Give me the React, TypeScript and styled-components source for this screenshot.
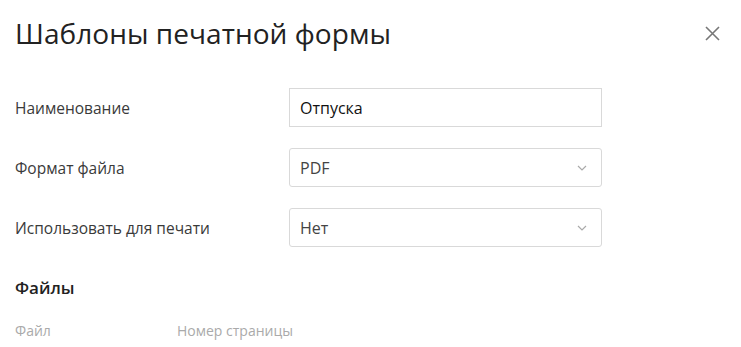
import React from 'react';
import styled, { createGlobalStyle } from 'styled-components';

const GlobalStyle = createGlobalStyle`
  html, body {
    margin: 0;
    padding: 0;
    background: #fff;
  }
  body {
    font-family: "Open Sans", "Noto Sans", Arial, sans-serif;
    color: #333;
  }
`;

const Dialog = styled.div`
  width: 741px;
  height: 347px;
  box-sizing: border-box;
  padding: 14px 15px 0 15px;
  overflow: hidden;
`;

const Header = styled.div`
  display: flex;
  align-items: center;
  justify-content: space-between;
  height: 38px;
`;

const Title = styled.h1`
  margin: 0;
  font-size: 28px;
  font-weight: 400;
  color: #222;
  letter-spacing: 0.05px;
`;

const CloseButton = styled.button`
  border: none;
  background: none;
  padding: 0;
  margin-right: 6px;
  width: 16px;
  height: 16px;
  display: flex;
  align-items: center;
  justify-content: center;
  cursor: pointer;
`;

const Form = styled.div`
  display: flex;
  flex-direction: column;
  gap: 21px;
  margin-top: 36px;
`;

const Row = styled.div`
  display: grid;
  grid-template-columns: 274px 313px;
  align-items: center;
`;

const Label = styled.label`
  font-size: 15.5px;
  color: #3a3a3a;
`;

const Field = styled.div<{ rounded?: boolean }>`
  height: 39px;
  box-sizing: border-box;
  border: 1px solid #d9d9d9;
  border-radius: ${p => (p.rounded ? '3px' : '0')};
  display: flex;
  align-items: center;
  justify-content: space-between;
  padding: 0 14px 0 10px;
  font-size: 16px;
  color: ${p => (p.rounded ? '#444' : '#111')};
`;

const Section = styled.h2`
  margin: 29px 0 0 0;
  font-size: 17px;
  font-weight: 600;
  color: #222;
`;

const ColumnHeads = styled.div`
  display: grid;
  grid-template-columns: 162px 1fr;
  margin-top: 22px;
  font-size: 14px;
  color: #aaa;
`;

const Chevron = () => (
  <svg width="10" height="6" viewBox="0 0 10 6">
    <path d="M1 1l4 4 4-4" fill="none" stroke="#aaa" strokeWidth="1.2" />
  </svg>
);

const App = () => {
  return (
    <>
      <GlobalStyle />
      <Dialog>
        <Header>
          <Title>Шаблоны печатной формы</Title>
          <CloseButton aria-label="Закрыть">
            <svg width="15" height="15" viewBox="0 0 15 15">
              <path d="M1 1l13 13M14 1L1 14" stroke="#777" strokeWidth="1.6" />
            </svg>
          </CloseButton>
        </Header>
        <Form>
          <Row>
            <Label>Наименование</Label>
            <Field>Отпуска</Field>
          </Row>
          <Row>
            <Label>Формат файла</Label>
            <Field rounded>
              PDF
              <Chevron />
            </Field>
          </Row>
          <Row>
            <Label>Использовать для печати</Label>
            <Field rounded>
              Нет
              <Chevron />
            </Field>
          </Row>
        </Form>
        <Section>Файлы</Section>
        <ColumnHeads>
          <span>Файл</span>
          <span>Номер страницы</span>
        </ColumnHeads>
      </Dialog>
    </>
  );
};

export default App;
